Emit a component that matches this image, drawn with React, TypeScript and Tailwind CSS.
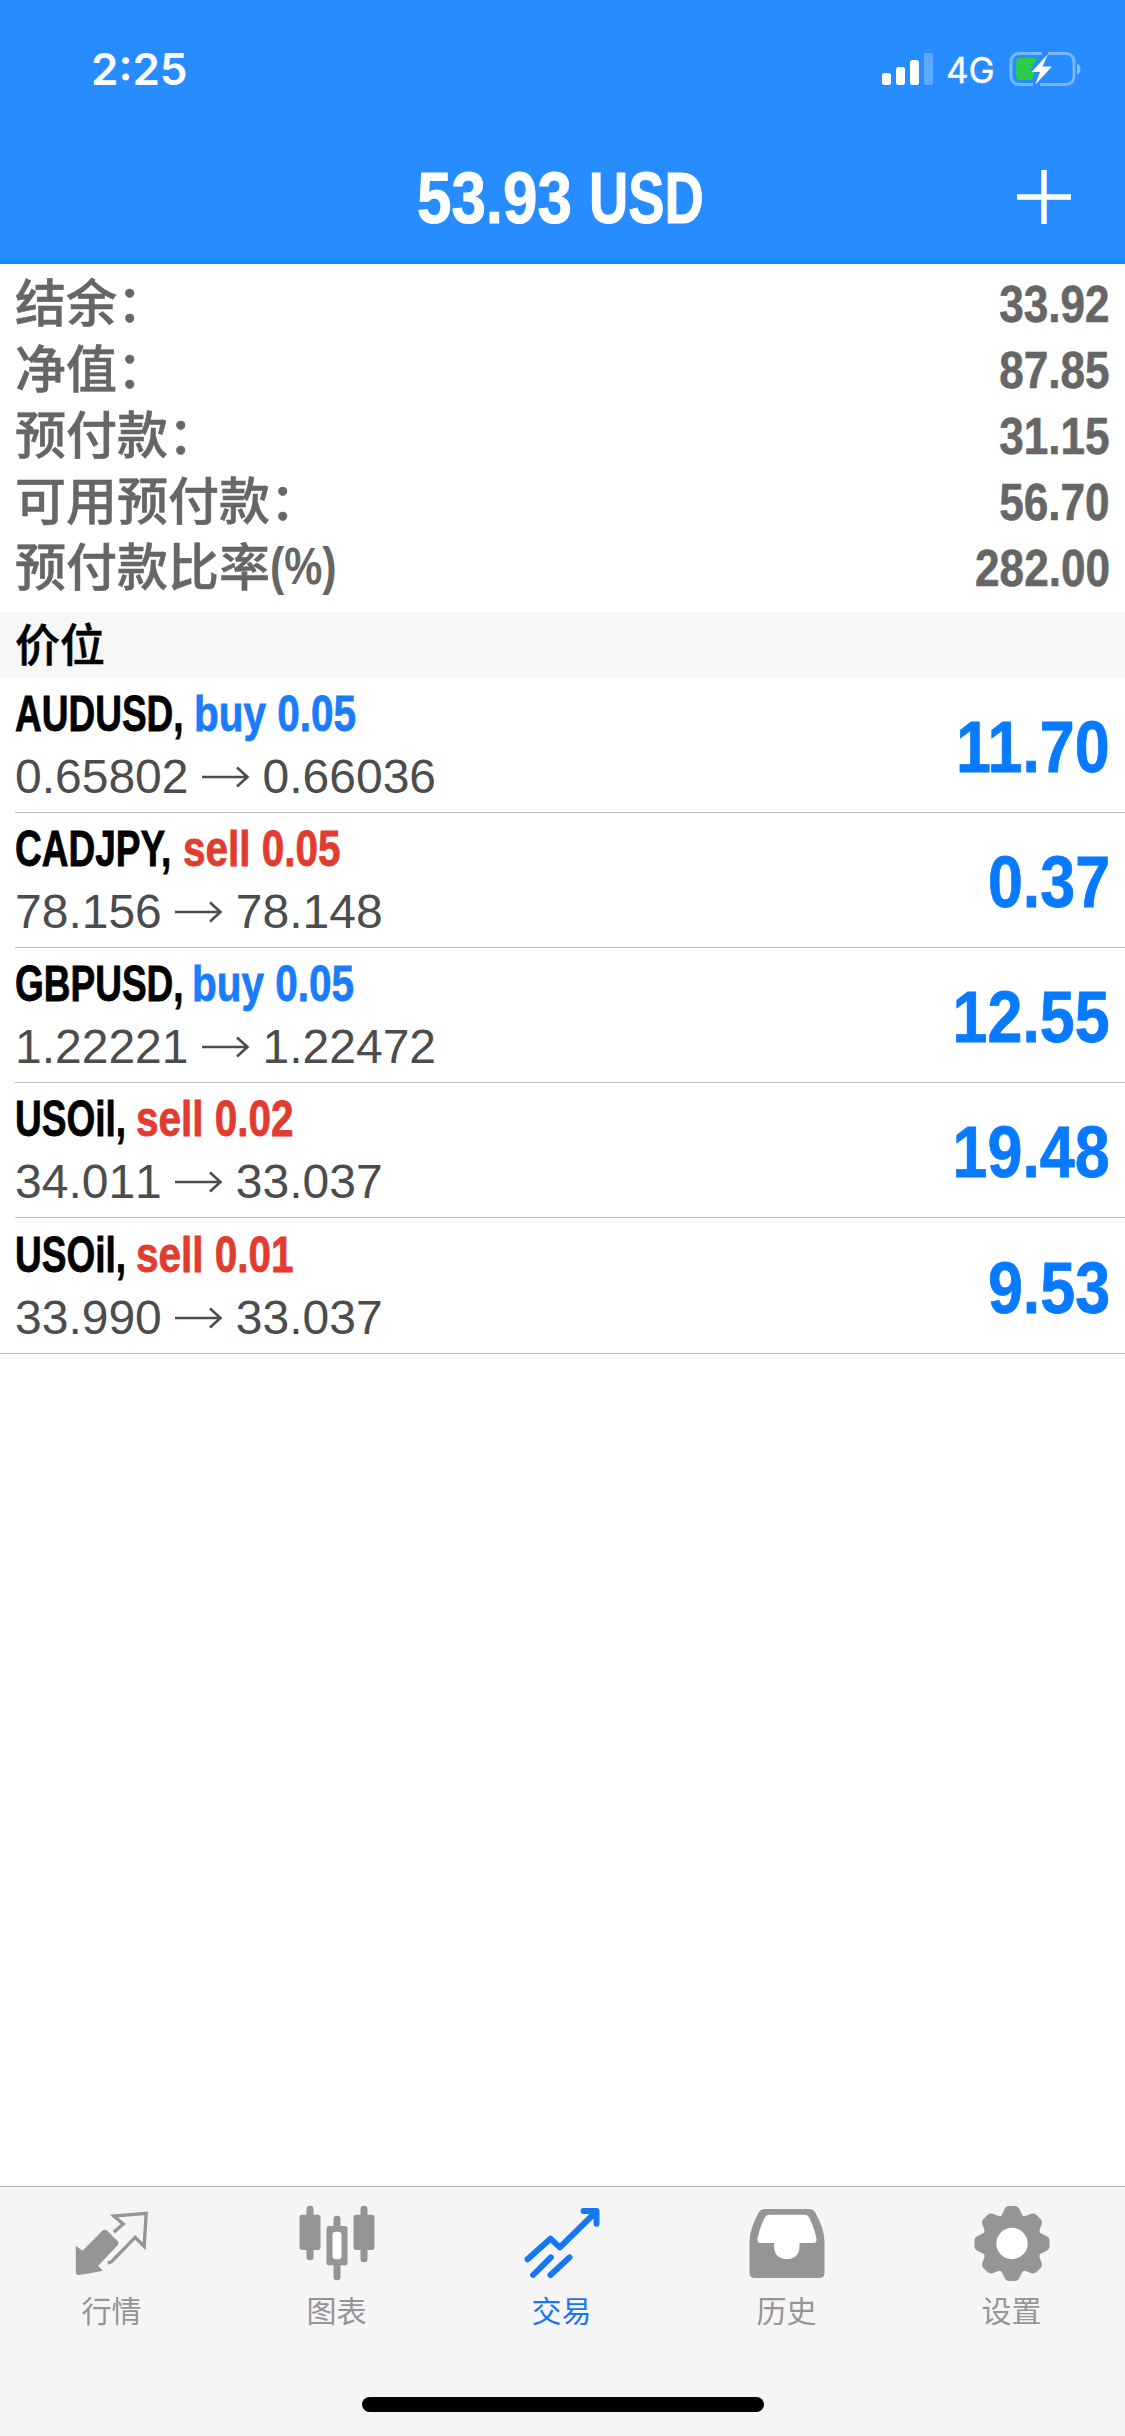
import type { ReactNode } from "react";

const summary = [
  { label: "结余：", value: "33.92" },
  { label: "净值：", value: "87.85" },
  { label: "预付款：", value: "31.15" },
  { label: "可用预付款：", value: "56.70" },
  { label: "预付款比率", suffix: "(%)", value: "282.00" },
];

const positions = [
  { symbol: "AUDUSD,", box: "w-[179px]", side: "buy 0.05", tone: "text-[#1a7cf9]", open: "0.65802", now: "0.66036", profit: "11.70" },
  { symbol: "CADJPY,", box: "w-[168px]", side: "sell 0.05", tone: "text-[#e23b30]", open: "78.156", now: "78.148", profit: "0.37" },
  { symbol: "GBPUSD,", box: "w-[177px]", side: "buy 0.05", tone: "text-[#1a7cf9]", open: "1.22221", now: "1.22472", profit: "12.55" },
  { symbol: "USOil,", box: "w-[121px]", side: "sell 0.02", tone: "text-[#e23b30]", open: "34.011", now: "33.037", profit: "19.48" },
  { symbol: "USOil,", box: "w-[121px]", side: "sell 0.01", tone: "text-[#e23b30]", open: "33.990", now: "33.037", profit: "9.53" },
];

function StatusIcons() {
  return (
    <div className="flex items-center">
      <svg width="52" height="34" viewBox="0 0 52 34" className="fill-white">
        <rect x="0" y="21" width="9" height="12" rx="2.5" />
        <rect x="14" y="15" width="9" height="18" rx="2.5" />
        <rect x="28" y="8" width="9" height="25" rx="2.5" />
        <rect x="42" y="1" width="9" height="32" rx="2.5" opacity="0.25" />
      </svg>
      <span className="ml-[12px] w-[62px] pt-[2px] text-[35px] leading-[34px] font-normal [-webkit-text-stroke:0.4px]">4G</span>
      <svg width="74" height="36" viewBox="0 0 74 36">
        <path d="M34 2.5H11A8 8 0 0 0 3 10.500V25.500A8 8 0 0 0 11 33.500H25M40 2.500H58A8 8 0 0 1 66 10.500V25.500A8 8 0 0 1 58 33.500H32" fill="none" stroke="#fff" strokeOpacity="0.38" strokeWidth="3" />
        <path d="M69 12.500a6.500 6.500 0 0 1 0 11.500z" fill="#fff" fillOpacity="0.45" />
        <path d="M12 7H29L22 20H27L24 29H12a4 4 0 0 1-4-4V11a4 4 0 0 1 4-4z" fill="#2dcb4b" />
        <path d="M40 3L23.500 21H32L27 34L44 15.500H34.500z" fill="#fff" />
      </svg>
    </div>
  );
}

function Arrow() {
  return (
    <svg width="48" height="24" viewBox="0 0 48 24" fill="none" stroke="#4c4c4e" strokeWidth="2.6" className="mx-[13px]">
      <path d="M0 12H45M35 2.500L45.500 12L35 21.500" />
    </svg>
  );
}

function Tab({ label, viewBox, tone, children }: { label: string; viewBox: string; tone: string; children: ReactNode }) {
  return (
    <div className={"flex w-[225px] flex-col items-center pt-[15px] " + tone}>
      <svg width="90" height="84" viewBox={viewBox} fill="currentColor">
        {children}
      </svg>
      <span className="mt-[3px] mr-[2px] text-[30px] leading-[40px]">{label}</span>
    </div>
  );
}

const teeth = [0, 45, 90, 135, 180, 225, 270, 315];

export default function App() {
  return (
    <div className="flex h-[2436px] w-[1125px] flex-col overflow-hidden bg-white font-['Liberation_Sans','Noto_Sans_CJK_SC',sans-serif]">
      <header className="h-[264px] shrink-0 border-b-[5px] border-[#128cff] bg-[#268cff] text-white">
        <div className="flex h-[138px] items-center justify-between pr-[43px] pl-[91px] font-['Inter',sans-serif]">
          <span className="text-[44px] leading-none font-semibold">2:25</span>
          <StatusIcons />
        </div>
        <div className="grid h-[121px] grid-cols-[1fr_auto_1fr] items-center">
          <span />
          <h1 className="flex w-[292px] text-[72px] leading-[121px] font-bold whitespace-nowrap [-webkit-text-stroke:1px]">
            <span className="w-[172px]">
              <span className="inline-block origin-left scale-x-[0.86]">53.93</span>
            </span>
            <span className="inline-block origin-left scale-x-[0.755]">USD</span>
          </h1>
          <svg width="56" height="56" viewBox="0 0 56 56" className="mr-[53px] mb-[3px] justify-self-end" stroke="#fff" strokeWidth="5.5">
            <path d="M28 1V55M1 28H55" />
          </svg>
        </div>
      </header>

      <section className="flex h-[348px] shrink-0 flex-col px-[15px] pt-[6px] font-bold text-[#666]">
        {summary.map((row) => (
          <div key={row.label} className="flex h-[66px] items-center justify-between">
            <span className="flex items-center text-[51px] leading-[60px]">
              <span className="-mt-[6px] font-['Noto_Sans_CJK_SC'] font-medium [-webkit-text-stroke:0.5px]">{row.label}</span>
              {row.suffix && <span className="origin-left scale-x-[0.84]">{row.suffix}</span>}
            </span>
            <span className="origin-right scale-x-[0.865] pt-[3px] text-[51px] leading-[60px] [-webkit-text-stroke:0.6px]">{row.value}</span>
          </div>
        ))}
      </section>

      <div className="flex h-[66px] shrink-0 items-center bg-[#f7f7f7] px-[15px] font-['Noto_Sans_CJK_SC'] text-[45px] leading-[62px] font-medium text-black">
        <span className="-mt-[4px] [-webkit-text-stroke:0.5px]">价位</span>
      </div>

      <main className="flex grow flex-col">
        {positions.map((p, i) => (
          <div key={i} className={"flex items-center justify-between border-b border-[#bdbcc1] " + (i === 4 ? "h-[136px] px-[15px]" : "ml-[15px] h-[135px] pr-[15px]")}>
            <div className="flex flex-col">
              <div className="flex h-[64px] text-[50px] leading-[64px] font-bold whitespace-nowrap text-black [-webkit-text-stroke:0.8px]">
                <span className={p.box}>
                  <span className="inline-block origin-left scale-x-[0.74]">{p.symbol}</span>
                </span>
                <span className={"inline-block origin-left scale-x-[0.81] " + p.tone}>{p.side}</span>
              </div>
              <div className="flex h-[62px] items-center text-[48px] leading-[62px] text-[#4c4c4e] [font-kerning:none]">
                {p.open}
                <Arrow />
                {p.now}
              </div>
            </div>
            <span className="origin-right scale-x-[0.86] pt-[4px] text-[73px] leading-[130px] font-bold text-[#087aff] [-webkit-text-stroke:0.8px]">{p.profit}</span>
          </div>
        ))}
      </main>

      <footer className="flex h-[250px] shrink-0 flex-col items-center border-t border-[#b0b0b0] bg-[#f5f5f5] font-['Noto_Sans_CJK_SC']">
        <nav className="flex h-[210px]">
          <Tab label="行情" viewBox="202.5 96 270 252" tone="text-[#959595]">
            <path d="M226 227L246 242L305 183Q313 176 321 183L351 213Q357 220 350 227L293 287L307 302Q268 310 236 315Q226 315 226 305Z" />
            <path d="M340 187L368 162L340 138L437 130L431 229L404 202L333 275L322 280" fill="none" stroke="currentColor" strokeWidth="10" />
          </Tab>
          <Tab label="图表" viewBox="877.5 96 270 252" tone="text-[#959595]">
            <rect x="897" y="134" width="63" height="106" rx="8" />
            <rect x="918" y="107" width="21" height="164" rx="10" />
            <rect x="1059" y="134" width="63" height="106" rx="8" />
            <rect x="1080" y="107" width="21" height="170" rx="10" />
            <rect x="999" y="137" width="21" height="50" rx="10" />
            <rect x="999" y="265" width="21" height="66" rx="10" />
            <rect x="978" y="168" width="63" height="118" rx="8" />
            <rect x="996" y="185" width="27" height="83" rx="10" fill="#fff" />
          </Tab>
          <Tab label="交易" viewBox="232.5 96 270 252" tone="text-[#1477f5]">
            <path d="M261 268L330 206L358 232L466 126M429 123H468V161M278 315L331 262M330 315L387 262" fill="none" stroke="currentColor" strokeWidth="18" strokeLinecap="round" strokeLinejoin="round" />
          </Tab>
          <Tab label="历史" viewBox="187.5 96 270 252" tone="text-[#959595]">
            <path d="M255 117H384Q398 117 404 127Q432 178 432 215V308Q432 324 416 324H223Q207 324 207 308V215Q207 178 235 127Q241 117 255 117Z" />
            <path d="M267 134H372Q382 134 387 144Q404 180 408 208Q409 219 398 219H357V230C357 254 341 267 319 267C297 267 281 254 281 230V219H241Q230 219 231 208Q235 180 252 144Q257 134 267 134Z" fill="#fff" />
          </Tab>
          <Tab label="设置" viewBox="862.5 96 270 252" tone="text-[#959595]">
            <circle cx="994.5" cy="220.500" r="87" />
            {teeth.map((a) => (
              <path key={a} transform={`rotate(${a} 994.5 220.5)`} d="M954 144Q966 136 970 122Q975 108 986 108H1003Q1014 108 1019 122Q1023 136 1035 144L1020 170H969Z" />
            ))}
            <circle cx="994.5" cy="220.500" r="47" fill="#fff" />
          </Tab>
        </nav>
        <div className="h-[15px] w-[402px] rounded-full bg-black" />
      </footer>
    </div>
  );
}
